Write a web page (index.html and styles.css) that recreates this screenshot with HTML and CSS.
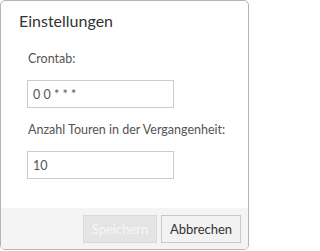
FILE: index.html
```html
<!DOCTYPE html>
<html lang="de">
<head>
<meta charset="utf-8">
<title>Einstellungen</title>
<link rel="stylesheet" href="styles.css">
</head>
<body>
<div class="dialog">
  <div class="dialog-header">
    <h1 class="dialog-title">Einstellungen</h1>
  </div>
  <div class="dialog-body">
    <label class="field-label" for="crontab">Crontab:</label>
    <input class="field-input" id="crontab" type="text" value="0 0 * * *">
    <label class="field-label field-label-2" for="touren">Anzahl Touren in der Vergangenheit:</label>
    <input class="field-input" id="touren" type="text" value="10">
  </div>
  <div class="dialog-footer">
    <button class="btn btn-save" disabled>Speichern</button>
    <button class="btn btn-cancel">Abbrechen</button>
  </div>
</div>
</body>
</html>
```

FILE: styles.css
```css
html, body {
  margin: 0;
  padding: 0;
  background: #ffffff;
}

body {
  font-family: Lato, "Open Sans", "Liberation Sans", sans-serif;
}

.dialog {
  box-sizing: border-box;
  width: 249px;
  height: 250px;
  border: 1px solid #b5b5b5;
  border-radius: 5px;
  background: #ffffff;
  display: flex;
  flex-direction: column;
  overflow: hidden;
}

.dialog-header {
  padding: 9px 17px 0 18px;
}

.dialog-title {
  margin: 0;
  font-size: 16px;
  line-height: 22px;
  font-weight: 400;
  color: #333333;
}

.dialog-body {
  flex: 1;
  display: flex;
  flex-direction: column;
  align-items: flex-start;
  padding: 19px 0 0 26px;
}

.field-label {
  padding-left: 1px;
  font-size: 12.5px;
  line-height: 16px;
  color: #555555;
}

.field-label-2 {
  margin-top: 14px;
}

.field-input {
  box-sizing: border-box;
  width: 147px;
  height: 28px;
  margin: 13px 0 0;
  padding: 0 5px;
  border: 1px solid #cccccc;
  border-radius: 0;
  font-family: inherit;
  font-size: 12.5px;
  color: #555555;
  background: #ffffff;
  outline: none;
}

.dialog-footer {
  height: 41px;
  box-sizing: border-box;
  padding: 7px 7px 0 0;
  background: #f4f4f4;
  display: flex;
  justify-content: flex-end;
  align-items: flex-start;
  gap: 4px;
}

.btn {
  box-sizing: border-box;
  height: 28px;
  padding: 0;
  border: 1px solid #cccccc;
  border-radius: 0;
  font-family: inherit;
  font-size: 13px;
  font-weight: 400;
}

.btn-save {
  width: 74px;
  background: #e4e4e4;
  border-color: #dadada;
  color: #f7f7f7;
}

.btn-cancel {
  width: 80px;
  background: #f2f2f2;
  border-color: #c8c8c8;
  color: #333333;
}
```
